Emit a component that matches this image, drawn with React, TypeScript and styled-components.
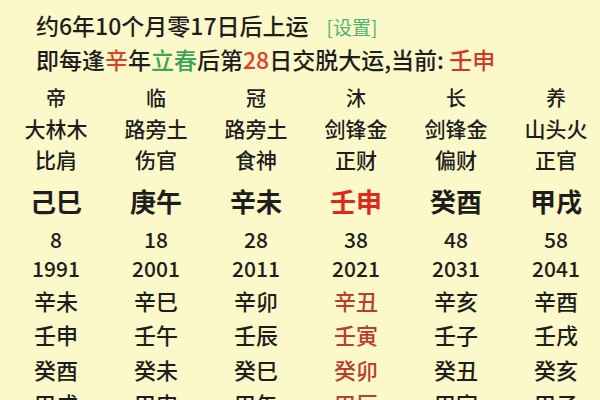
import React from "react";
import styled, { createGlobalStyle } from "styled-components";

const Global = createGlobalStyle`
  html, body { margin: 0; padding: 0; background: #fbf8c9; overflow: hidden; }
  body { font-family: "Noto Sans CJK SC", "Noto Sans", sans-serif; color: #1e1e1e; }
`;

const Page = styled.div`
  width: 600px;
  height: 400px;
  overflow: hidden;
  background: #fbf8c9;
`;

const Header = styled.div`
  padding: 9px 0 0 36px;
  font-size: 23px;
  line-height: 32px;
  font-weight: 500;
`;

const Line = styled.div`
  white-space: nowrap;
`;

const Setting = styled.span`
  color: #4fb374;
  font-size: 19px;
  font-weight: 400;
  margin-left: 18px;
`;

const Hl = styled.span<{ $c: string }>`
  color: ${(p) => p.$c};
`;

const Table = styled.div`
  margin: 7px 0 0 6px;
  width: 600px;
`;

const Row = styled.div<{ $h: number; $size: number; $bold?: boolean }>`
  display: grid;
  grid-template-columns: repeat(6, 100px);
  height: ${(p) => p.$h}px;
  align-items: center;
  font-size: ${(p) => p.$size}px;
  font-weight: ${(p) => (p.$bold ? 700 : 500)};
  line-height: 1;
`;

const Cell = styled.div<{ $color?: string }>`
  text-align: center;
  white-space: nowrap;
  color: ${(p) => p.$color || "#1e1e1e"};
`;

type RowDef = { cells: string[]; h: number; size: number; bold?: boolean; red: string };

const rows: RowDef[] = [
  { cells: ["帝", "临", "冠", "沐", "长", "养"], h: 31, size: 20, red: "#1e1e1e" },
  { cells: ["大林木", "路旁土", "路旁土", "剑锋金", "剑锋金", "山头火"], h: 31, size: 21, red: "#1e1e1e" },
  { cells: ["比肩", "伤官", "食神", "正财", "偏财", "正官"], h: 31, size: 21, red: "#1e1e1e" },
  { cells: ["己巳", "庚午", "辛未", "壬申", "癸酉", "甲戌"], h: 51, size: 26, bold: true, red: "#e2261b" },
  { cells: ["8", "18", "28", "38", "48", "58"], h: 26, size: 21, red: "#1e1e1e" },
  { cells: ["1991", "2001", "2011", "2021", "2031", "2041"], h: 32, size: 21, red: "#1e1e1e" },
  { cells: ["辛未", "辛巳", "辛卯", "辛丑", "辛亥", "辛酉"], h: 32, size: 22, red: "#b9402e" },
  { cells: ["壬申", "壬午", "壬辰", "壬寅", "壬子", "壬戌"], h: 35, size: 22, red: "#b9402e" },
  { cells: ["癸酉", "癸未", "癸巳", "癸卯", "癸丑", "癸亥"], h: 35, size: 22, red: "#b9402e" },
  { cells: ["甲戌", "甲申", "甲午", "甲辰", "甲寅", "甲子"], h: 34, size: 22, red: "#b9402e" },
];

export default function App() {
  return (
    <Page>
      <Global />
      <Header>
        <Line>
          约6年10个月零17日后上运<Setting>[设置]</Setting>
        </Line>
        <Line>
          即每逢<Hl $c="#d8432c">辛</Hl>年<Hl $c="#3ea45a">立春</Hl>后第
          <Hl $c="#d8432c">28</Hl>日交脱大运,当前: <Hl $c="#d0392a">壬申</Hl>
        </Line>
      </Header>
      <Table>
        {rows.map((r, i) => (
          <Row key={i} $h={r.h} $size={r.size} $bold={r.bold}>
            {r.cells.map((c, j) => (
              <Cell key={j} $color={j === 3 ? r.red : undefined}>
                {c}
              </Cell>
            ))}
          </Row>
        ))}
      </Table>
    </Page>
  );
}
